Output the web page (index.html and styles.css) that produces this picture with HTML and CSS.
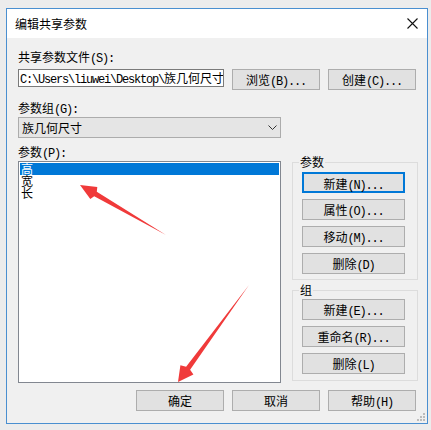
FILE: index.html
```html
<!DOCTYPE html>
<html lang="zh-CN">
<head>
    <meta charset="UTF-8">
    <title>编辑共享参数</title>
    <link rel="stylesheet" href="styles.css">
</head>
<body>

<div class="window">
    <div class="titlebar">
        <span class="title">编辑共享参数</span>
        <svg class="close" width="11" height="11" viewBox="0 0 11 11">
            <path d="M0.5 0.5 L10.5 10.5 M10.5 0.5 L0.5 10.5" stroke="#111" stroke-width="1.1" fill="none"/>
        </svg>
    </div>

    <div class="client">
        <div class="label">共享参数文件<span class="en">(S):</span></div>
        <div class="file-row">
            <div class="textbox"><span class="en">C:\Users\liuwei\Desktop\</span>族几何尺寸</div>
            <button class="btn">浏览<span class="en">(B)...</span></button>
            <button class="btn">创建<span class="en">(C)...</span></button>
        </div>

        <div class="label gap-top">参数组<span class="en">(G):</span></div>
        <div class="combo">
            <span>族几何尺寸</span>
            <svg width="9" height="5" viewBox="0 0 9 5">
                <path d="M0.5 0.5 L4.5 4.5 L8.5 0.5" stroke="#333" stroke-width="1" fill="none"/>
            </svg>
        </div>

        <div class="label params-label">参数<span class="en">(P):</span></div>
        <div class="main">
            <ul class="listbox">
                <li class="selected">高</li>
                <li>宽</li>
                <li>长</li>
            </ul>
            <div class="side">
                <fieldset class="group">
                    <legend>参数</legend>
                    <button class="btn focused">新建<span class="en">(N)...</span></button>
                    <button class="btn">属性<span class="en">(O)...</span></button>
                    <button class="btn">移动<span class="en">(M)...</span></button>
                    <button class="btn">删除<span class="en">(D)</span></button>
                </fieldset>
                <fieldset class="group second">
                    <legend>组</legend>
                    <button class="btn">新建<span class="en">(E)...</span></button>
                    <button class="btn">重命名<span class="en">(R)...</span></button>
                    <button class="btn">删除<span class="en">(L)</span></button>
                </fieldset>
            </div>
        </div>

        <div class="footer">
            <button class="btn">确定</button>
            <button class="btn">取消</button>
            <button class="btn">帮助<span class="en">(H)</span></button>
        </div>
    </div>

    <svg class="grip" width="8" height="8" viewBox="0 0 8 8">
        <rect x="6" y="0" width="2" height="2" fill="#bcbcbc"/>
        <rect x="3" y="3" width="2" height="2" fill="#bcbcbc"/>
        <rect x="6" y="3" width="2" height="2" fill="#bcbcbc"/>
        <rect x="0" y="6" width="2" height="2" fill="#bcbcbc"/>
        <rect x="3" y="6" width="2" height="2" fill="#bcbcbc"/>
        <rect x="6" y="6" width="2" height="2" fill="#bcbcbc"/>
    </svg>
</div>

<!-- annotation arrows drawn over the dialog -->
<svg class="arrows" width="431" height="430" viewBox="0 0 431 430">
    <polygon points="80,185 97.3,187 96.8,191.8 166,235 94.2,196.2 90.3,199" fill="#f03a3a"/>
    <polygon points="178,382 180.4,365.2 186.1,366.8 249,285 190.1,369.8 193.4,374.6" fill="#f03a3a"/>
</svg>

</body>
</html>
```

FILE: styles.css
```css
body {
    margin: 0;
    background: #ececec;
    font: 12px "Noto Sans CJK SC", sans-serif;
    color: #000;
    overflow: hidden;
}
.en {
    font-family: "Liberation Mono", monospace;
    font-size: 12px;
    letter-spacing: -1.2px;
}
.window {
    position: relative;
    margin: 8px 0 0 6px;
    width: 420px;
    height: 414px;
    border: 1px solid #4a8fd0;
    background: #f0f0f0;
}
.titlebar {
    height: 29px;
    background: #fff;
    display: flex;
    align-items: center;
    justify-content: space-between;
    padding: 0 9px 0 8px;
}
.client { padding: 12px 11px 0 11px; }
.label { line-height: 14px; height: 14px; }
.gap-top { margin-top: 11px; }
.params-label { margin-top: 7px; }

.file-row {
    display: flex;
    gap: 8px;
    margin-top: 5px;
    align-items: flex-start;
}
.textbox {
    width: 206px;
    height: 18px;
    box-sizing: border-box;
    border: 1px solid #7a7a7a;
    background: #fff;
    padding: 0 1px;
    line-height: 16px;
    white-space: nowrap;
    overflow: hidden;
}
.btn {
    width: 88px;
    height: 21px;
    box-sizing: border-box;
    border: 1px solid #adadad;
    background: #e1e1e1;
    font: inherit;
    color: #000;
    padding: 0;
    line-height: 19px;
}
.btn.focused { border: 2px solid #0078d7; }

.combo {
    margin-top: 2px;
    width: 263px;
    height: 21px;
    box-sizing: border-box;
    border: 1px solid #acacac;
    background: #e5e5e5;
    display: flex;
    align-items: center;
    justify-content: space-between;
    padding: 0 3px 0 3px;
}

.main {
    display: flex;
    gap: 11px;
    margin-top: 2px;
}
.listbox {
    margin: 0;
    padding: 1px;
    list-style: none;
    width: 263px;
    height: 222px;
    box-sizing: border-box;
    border: 1px solid #828790;
    background: #fff;
}
.listbox li {
    height: 12px;
    line-height: 12px;
    padding-left: 1px;
}
.listbox li.selected { background: #0078d7; color: #fff; }

.side {
    width: 126px;
    margin-top: -5px;
    margin-right: -2px;
}
.group {
    margin: 0;
    border: 1px solid #dcdcdc;
    padding: 4px 12px 5px 9px;
    display: flex;
    flex-direction: column;
    gap: 6px;
}
.group legend {
    line-height: 12px;
    padding: 0 1px;
    margin-left: -3px;
}
.group .btn { width: 103px; }
.group.second { margin-top: 4px; padding-top: 3px; padding-bottom: 6px; }

.footer {
    display: flex;
    justify-content: flex-end;
    gap: 8px;
    margin-top: 7px;
}

.grip { position: absolute; right: 2px; bottom: 2px; }
.arrows { position: absolute; left: 0; top: 0; pointer-events: none; }
```
